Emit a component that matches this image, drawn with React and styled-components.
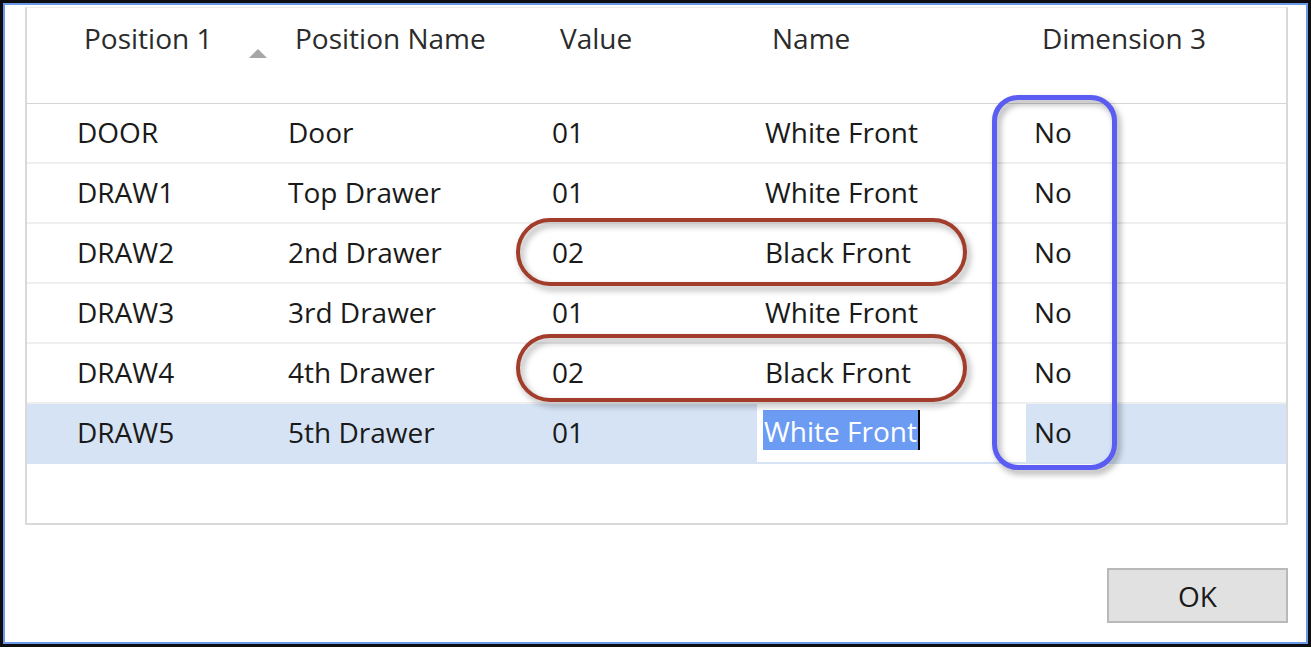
import React from 'react';
import styled, { createGlobalStyle } from 'styled-components';

const GlobalStyle = createGlobalStyle`
  html, body { margin: 0; padding: 0; background: #fff; }
  body { font-family: "Open Sans", "Noto Sans", sans-serif; }
  * { box-sizing: border-box; }
`;

const COLUMNS = '42px 211px 264px 213px 269px 1fr';

const Frame = styled.div`
  width: 1311px;
  height: 647px;
  border: 3px solid #0d0d12;
  box-shadow: inset 0 0 0 2px #6b9be6;
  background: #fff;
  padding: 4px 20px 0 22px;
  display: flex;
  flex-direction: column;
`;

const Grid = styled.div`
  position: relative;
  height: 518px;
  border: 2px solid #d9d9d9;
  border-top: 1px solid #ececec;
  display: flex;
  flex-direction: column;
`;

const HeaderRow = styled.div`
  display: grid;
  grid-template-columns: ${COLUMNS};
  height: 96px;
  border-bottom: 1px solid #d4d4d4;
`;

const HeaderCell = styled.div`
  display: flex;
  align-items: flex-start;
  padding: 11px 0 0 ${(p) => p.$pad || 15}px;
  font-size: 28px;
  line-height: 38px;
  color: #2b2b2b;
  white-space: nowrap;
`;

const SortArrow = styled.span`
  width: 0;
  height: 0;
  border-left: 9px solid transparent;
  border-right: 9px solid transparent;
  border-bottom: 9px solid #a6a6a6;
  margin: 30px 13px 0 auto;
`;

const Row = styled.div`
  display: grid;
  grid-template-columns: ${COLUMNS};
  height: 60px;
  border-bottom: 2px solid ${(p) => (p.$selected ? '#d5e3f4' : '#efefef')};
  background: ${(p) => (p.$selected ? '#d5e3f4' : '#fff')};
`;

const Cell = styled.div`
  padding-left: 8px;
  font-size: 28px;
  line-height: 56px;
  color: #1a1a1a;
  white-space: nowrap;
`;

const EditCell = styled.div`
  display: flex;
  align-items: flex-start;
  padding: 6px 0 0 6px;
  background: #fff;
`;

const Selection = styled.span`
  display: block;
  height: 40px;
  padding: 0 1px 0 1px;
  font-size: 28px;
  line-height: 42px;
  color: #fff;
  background: #6c9bf3;
  white-space: nowrap;
  overflow: hidden;
`;

const Caret = styled.span`
  display: block;
  width: 2px;
  height: 40px;
  background: #000;
`;

const RedPill = styled.div`
  position: absolute;
  left: 489px;
  top: ${(p) => p.$top}px;
  width: 451px;
  height: 68px;
  border: 4px solid #a23c2b;
  border-radius: 34px;
  filter: drop-shadow(3px 4px 3px rgba(0, 0, 0, 0.35));
  pointer-events: none;
`;

const BlueBox = styled.div`
  position: absolute;
  left: 965px;
  top: 87px;
  width: 125px;
  height: 375px;
  border: 5px solid #5a5cf2;
  border-radius: 26px;
  filter: drop-shadow(3px 4px 3px rgba(0, 0, 0, 0.35));
  pointer-events: none;
`;

const Footer = styled.div`
  display: flex;
  justify-content: flex-end;
  padding-top: 43px;
`;

const OkButton = styled.button`
  width: 181px;
  height: 55px;
  border: 2px solid #b9b9b9;
  background: #e1e1e1;
  font-family: inherit;
  font-size: 28px;
  color: #1a1a1a;
  padding: 0;
`;

const headers = [
  { label: '', pad: 0 },
  { label: 'Position 1', pad: 15, sort: true },
  { label: 'Position Name', pad: 15 },
  { label: 'Value', pad: 16 },
  { label: 'Name', pad: 15 },
  { label: 'Dimension 3', pad: 16 },
];

const rows = [
  ['DOOR', 'Door', '01', 'White Front', 'No'],
  ['DRAW1', 'Top Drawer', '01', 'White Front', 'No'],
  ['DRAW2', '2nd Drawer', '02', 'Black Front', 'No'],
  ['DRAW3', '3rd Drawer', '01', 'White Front', 'No'],
  ['DRAW4', '4th Drawer', '02', 'Black Front', 'No'],
  ['DRAW5', '5th Drawer', '01', 'White Front', 'No'],
];

export default function App() {
  const selectedIndex = rows.length - 1;
  return (
    <>
      <GlobalStyle />
      <Frame>
        <Grid>
          <HeaderRow>
            {headers.map((h, i) => (
              <HeaderCell key={i} $pad={h.pad}>
                {h.label}
                {h.sort && <SortArrow />}
              </HeaderCell>
            ))}
          </HeaderRow>
          {rows.map((r, i) => {
            const selected = i === selectedIndex;
            return (
              <Row key={r[0]} $selected={selected}>
                <Cell />
                <Cell>{r[0]}</Cell>
                <Cell>{r[1]}</Cell>
                <Cell>{r[2]}</Cell>
                {selected ? (
                  <EditCell>
                    <Selection>{r[3]}</Selection>
                    <Caret />
                  </EditCell>
                ) : (
                  <Cell>{r[3]}</Cell>
                )}
                <Cell>{r[4]}</Cell>
              </Row>
            );
          })}
          <RedPill $top={210} />
          <RedPill $top={326} />
          <BlueBox />
        </Grid>
        <Footer>
          <OkButton>OK</OkButton>
        </Footer>
      </Frame>
    </>
  );
}
